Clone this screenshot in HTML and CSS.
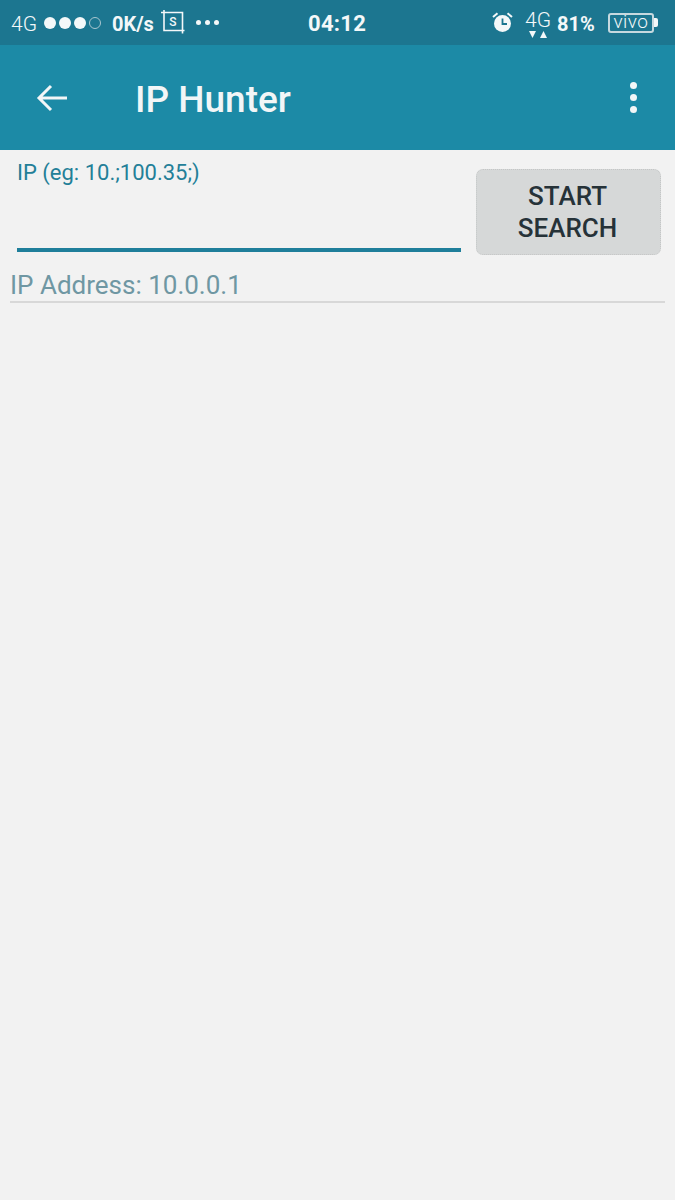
FILE: index.html
```html
<!DOCTYPE html>
<html lang="en">
	<head>
		<meta charset="UTF-8">
		<meta name="viewport" content="width=device-width, initial-scale=1.0">
		<title>IP Hunter</title>
		<link rel="stylesheet" href="styles.css">
	</head>
	<body>
		<div class="status-bar">
			<div class="status-left">
				<span class="net">4G</span>
				<div class="signal">
					<i class="dot"></i><i class="dot"></i><i class="dot"></i><i class="dot empty"></i>
				</div>
				<span class="speed">0K/s</span>
				<svg class="shot-icon" width="24" height="24" viewBox="0 0 24 24" fill="none" stroke="#f4f8f9" stroke-width="1.600">
					<path d="M0 2.500H3M3 0V20.500H23.500M3 2.500H21.500V23.500"/>
					<text x="12" y="16" font-family="Roboto" font-size="12" font-weight="500" text-anchor="middle" fill="#f4f8f9" stroke="none">S</text>
				</svg>
				<div class="more-dots"><i></i><i></i><i></i></div>
			</div>
			<span class="clock">04:12</span>
			<div class="status-right">
				<svg class="alarm" width="21" height="21" viewBox="0 0 21 21">
					<circle cx="10.500" cy="11.500" r="8.500" fill="#f4f8f9"/>
					<path d="M10.500 6.500V12H15" fill="none" stroke="#1c7690" stroke-width="1.800"/>
					<path d="M1 5L5.500 1.200M20 5L15.500 1.200" fill="none" stroke="#f4f8f9" stroke-width="2"/>
				</svg>
				<div class="net-up">
					<span>4G</span>
					<svg width="18" height="8" viewBox="0 0 18 8" fill="#f4f8f9"><path d="M0 1H7L3.500 8Z"/><path d="M11 8H18L14.500 1Z"/></svg>
				</div>
				<span class="percent">81%</span>
				<div class="battery">
					<div class="battery-body">vivo</div>
					<i class="battery-cap"></i>
				</div>
			</div>
		</div>
		<div class="toolbar">
			<svg class="back" width="32" height="28" viewBox="0 0 32 28" fill="none" stroke="#f2f6f7" stroke-width="3">
				<path d="M31 14H3M15 2L3 14L15 26"/>
			</svg>
			<h1>IP Hunter</h1>
			<div class="overflow"><i></i><i></i><i></i></div>
		</div>
		<div class="search-row">
			<div class="field">
				<label for="ip_input">IP (eg: 10.;100.35;)</label>
				<input id="ip_input" type="text">
			</div>
			<button class="start-btn">START<br>SEARCH</button>
		</div>
		<div class="result-row">IP Address: 10.0.0.1</div>
	</body>
</html>
```
FILE: styles.css
```css
body {
	font-family: Roboto, "Liberation Sans", sans-serif;
	background-color: #f2f2f2;
	margin: 0;
	height: 1200px;
	overflow: hidden;
}
.status-bar {
	height: 45px;
	background-color: #1c7690;
	color: #f4f8f9;
	display: flex;
	align-items: center;
	justify-content: space-between;
	padding: 0 17px 0 11px;
	position: relative;
}
.status-left, .status-right {
	display: flex;
	align-items: center;
}
.net {
	font-size: 21px;
	font-weight: 300;
	width: 33px;
	padding-top: 3px;
}
.signal {
	display: flex;
	gap: 3px;
	width: 68px;
}
.dot {
	width: 12px;
	height: 12px;
	border-radius: 50%;
	background: #f4f8f9;
}
.dot.empty {
	background: none;
	border: 1.500px solid #a9c6cf;
	box-sizing: border-box;
}
.speed {
	font-size: 20px;
	font-weight: 700;
	width: 49px;
	padding-top: 2px;
}
.shot-icon {
	margin-top: -1px;
}
.more-dots {
	display: flex;
	gap: 4px;
	margin-left: 11px;
}
.more-dots i {
	width: 5px;
	height: 5px;
	border-radius: 50%;
	background: #f4f8f9;
}
.clock {
	position: absolute;
	left: 308px;
	top: 11px;
	font-size: 22px;
	font-weight: 700;
	letter-spacing: 0.300px;
}
.alarm {
	margin-right: 12px;
}
.net-up {
	display: flex;
	flex-direction: column;
	align-items: center;
	width: 26px;
	margin-right: 6px;
	font-size: 21px;
	font-weight: 300;
	line-height: 21px;
	margin-top: 2px;
}
.net-up svg {
	display: block;
	margin-top: -1px;
}
.percent {
	font-size: 20px;
	font-weight: 700;
	width: 51px;
	padding-top: 2px;
}
.battery {
	display: flex;
	align-items: center;
}
.battery-body {
	width: 46px;
	height: 20px;
	box-sizing: border-box;
	border: 2px solid #c6d9df;
	border-radius: 3px;
	font-size: 19px;
	line-height: 13px;
	font-weight: 300;
	text-align: center;
	letter-spacing: 0.500px;
}
.battery-cap {
	width: 4px;
	height: 9px;
	background: #f4f8f9;
	border-radius: 0 2px 2px 0;
}
.toolbar {
	height: 105px;
	background-color: #1c8aa6;
	display: flex;
	align-items: center;
	padding: 0 36px;
	color: #f2f6f7;
}
.back {
	margin-top: 1px;
}
h1 {
	font-size: 37px;
	font-weight: 500;
	margin: 0 0 0 67px;
	flex: 1;
	position: relative;
	top: 2px;
}
.overflow {
	display: flex;
	flex-direction: column;
	gap: 5px;
	margin-right: 2px;
	margin-top: -1px;
}
.overflow i {
	width: 7px;
	height: 7px;
	border-radius: 50%;
	background: #f2f6f7;
}
.search-row {
	display: flex;
	padding: 19px 14px 0 17px;
	height: 86px;
}
.field {
	width: 444px;
	height: 92px;
	margin-top: -9px;
	display: flex;
	flex-direction: column;
	justify-content: space-between;
}
.field label {
	font-size: 22px;
	line-height: 26px;
	color: #237f98;
}
.field input {
	border: 0;
	border-bottom: 4px solid #1f7f9b;
	background: none;
	height: 30px;
	outline: none;
	padding: 0;
}
.start-btn {
	width: 185px;
	height: 86px;
	margin-left: 15px;
	background-color: #d6d8d8;
	border: 1px dotted #c4c6c6;
	border-radius: 7px;
	color: #263238;
	font-family: Roboto, sans-serif;
	font-size: 26px;
	font-weight: 500;
	line-height: 32px;
	padding: 0 2px 0 0;
}
.result-row {
	margin: 17px 10px 0;
	height: 29px;
	border-bottom: 2px solid #d8d8d8;
	font-size: 26px;
	line-height: 27px;
	color: #6f97a3;
}
```
